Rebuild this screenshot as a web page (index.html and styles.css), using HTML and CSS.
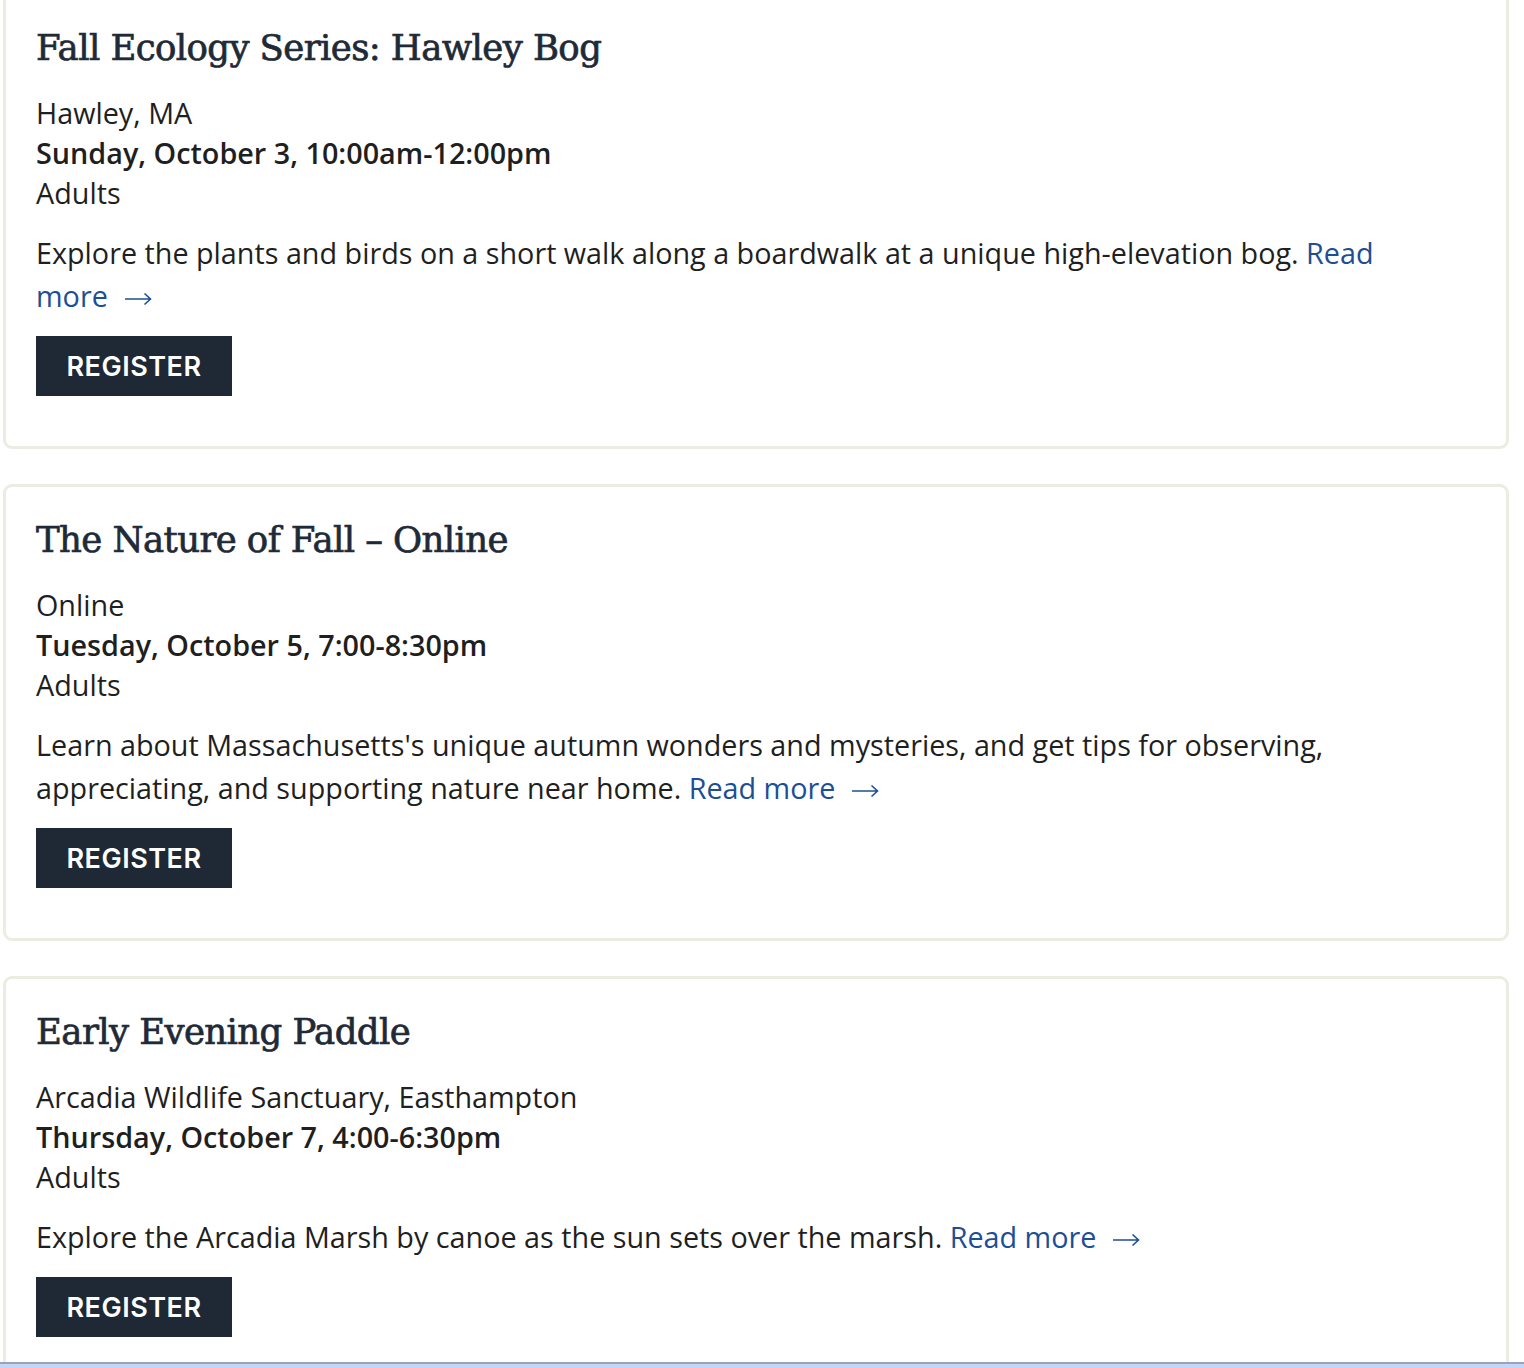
FILE: index.html
```html
<!DOCTYPE html>
<html lang="en">
<head>
<meta charset="utf-8">
<title>Events</title>
<link rel="stylesheet" href="styles.css">
</head>
<body>
<main class="event-list">
  <article class="event-card">
    <h2 class="event-title">Fall Ecology Series: Hawley Bog</h2>
    <div class="event-meta">
      <div class="event-location">Hawley, MA</div>
      <div class="event-date">Sunday, October 3, 10:00am-12:00pm</div>
      <div class="event-audience">Adults</div>
    </div>
    <p class="event-desc">Explore the plants and birds on a short walk along a boardwalk at a unique high-elevation bog. <a class="read-more" href="#">Read <span class="nowrap">more<svg class="arrow" width="28" height="14" viewBox="0 0 28 14" aria-hidden="true"><path d="M1 7H26.5M20.5 1.5L26.5 7L20.5 12.5" fill="none" stroke="currentColor" stroke-width="1.6"/></svg></span></a></p>
    <a class="btn-register" href="#">REGISTER</a>
  </article>
  <article class="event-card">
    <h2 class="event-title">The Nature of Fall – Online</h2>
    <div class="event-meta">
      <div class="event-location">Online</div>
      <div class="event-date">Tuesday, October 5, 7:00-8:30pm</div>
      <div class="event-audience">Adults</div>
    </div>
    <p class="event-desc">Learn about Massachusetts's unique autumn wonders and mysteries, and get tips for observing, appreciating, and supporting nature near home. <a class="read-more" href="#">Read <span class="nowrap">more<svg class="arrow" width="28" height="14" viewBox="0 0 28 14" aria-hidden="true"><path d="M1 7H26.5M20.5 1.5L26.5 7L20.5 12.5" fill="none" stroke="currentColor" stroke-width="1.6"/></svg></span></a></p>
    <a class="btn-register" href="#">REGISTER</a>
  </article>
  <article class="event-card">
    <h2 class="event-title">Early Evening Paddle</h2>
    <div class="event-meta">
      <div class="event-location">Arcadia Wildlife Sanctuary, Easthampton</div>
      <div class="event-date">Thursday, October 7, 4:00-6:30pm</div>
      <div class="event-audience">Adults</div>
    </div>
    <p class="event-desc">Explore the Arcadia Marsh by canoe as the sun sets over the marsh. <a class="read-more" href="#">Read <span class="nowrap">more<svg class="arrow" width="28" height="14" viewBox="0 0 28 14" aria-hidden="true"><path d="M1 7H26.5M20.5 1.5L26.5 7L20.5 12.5" fill="none" stroke="currentColor" stroke-width="1.6"/></svg></span></a></p>
    <a class="btn-register" href="#">REGISTER</a>
  </article>
</main>
<div class="bottom-strip"></div>
</body>
</html>
```

FILE: styles.css
```css
html, body {
  margin: 0;
  padding: 0;
  background: #ffffff;
}

body {
  font-family: "Open Sans", "Liberation Sans", sans-serif;
  color: #1f1f1f;
  overflow: hidden;
}

.event-list {
  display: flex;
  flex-direction: column;
  gap: 35px;
  margin-top: -8px;
  padding: 0 15px 0 3px;
}

.event-card {
  border: 3px solid #ecece2;
  border-radius: 9px;
  padding: 29px 30px 50px 30px;
  background: #fff;
}

.event-title {
  margin: 0 0 21px 0;
  font-family: "DejaVu Serif", "Liberation Serif", serif;
  font-weight: normal;
  font-size: 35.5px;
  line-height: 48px;
  color: #1e2a37;
  letter-spacing: -0.6px;
  -webkit-text-stroke: 0.7px #1e2a37;
}

.event-meta {
  font-size: 28.75px;
  line-height: 40px;
}

.event-date {
  font-weight: 600;
}

.event-desc {
  margin: 18px 0 19px 0;
  font-size: 28.75px;
  line-height: 43px;
}

.read-more {
  color: #1c4f94;
  text-decoration: none;
}

.nowrap {
  white-space: nowrap;
}

.arrow {
  margin-left: 16px;
  vertical-align: 1px;
}

.btn-register {
  display: flex;
  align-items: center;
  justify-content: center;
  width: 196px;
  height: 60px;
  background: #1e2935;
  color: #fff;
  font-family: "Inter", "Liberation Sans", sans-serif;
  font-weight: 600;
  font-size: 27px;
  text-decoration: none;
  letter-spacing: 0.5px;
}

.bottom-strip {
  position: fixed;
  left: 0;
  right: 0;
  bottom: 0;
  height: 6px;
  background: #c5d5f5;
  border-top: 2px solid #97a3bf;
  box-sizing: border-box;
}
```
